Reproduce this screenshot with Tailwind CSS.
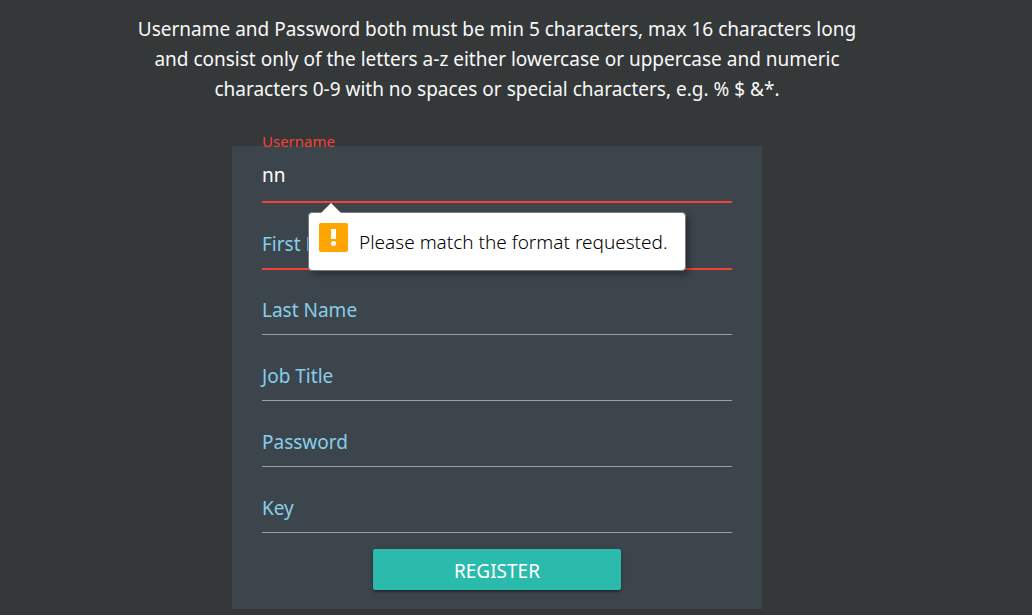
<!DOCTYPE html>
<html lang="en">
<head>
<meta charset="utf-8">
<meta name="viewport" content="width=device-width, initial-scale=1">
<title>Register</title>
<script src="https://cdn.jsdelivr.net/npm/@tailwindcss/browser@4"></script>
</head>
<body class="min-h-screen bg-[#353839] pr-[38px] font-['Segoe_UI','Noto_Sans',sans-serif] text-[19px] text-[#f8f8f8]">
<main class="flex flex-col items-center pt-[14px] pb-[6px]">
  <p class="max-w-[730px] text-center leading-[30px]">Username and Password both must be min 5 characters, max 16 characters long<br>and consist only of the letters a-z either lowercase or uppercase and numeric<br>characters 0-9 with no spaces or special characters, e.g. % $ &amp;*.</p>
  <form class="mt-[42px] flex w-full max-w-[530px] flex-col gap-[18px] bg-[#3d454c] px-[30px] pt-2 pb-[19px]" novalidate>
    <div class="relative">
      <input id="username" type="text" value="nn" class="block h-12 w-full border-b border-[#f44336] bg-transparent pb-[5px] text-white shadow-[0_1px_0_0_#f44336] outline-none">
      <label for="username" class="absolute -top-[23px] left-0 text-[15px] leading-5 text-[#f44336]">Username</label>
      <div role="alert" class="absolute top-[58px] left-[46px] z-10 flex h-[59px] min-w-[378px] items-center rounded-[4px] border border-[#777b80] bg-white pr-[10px] pl-[10px] text-black shadow-[4px_4px_6px_rgba(0,0,0,0.3)]">
        <svg class="absolute -top-[10px] left-[12px] h-[11px] w-5" viewBox="0 0 20 11" aria-hidden="true"><path d="M0 10L10 0L20 10V11H0Z" fill="#fff"/></svg>
        <svg class="mb-2 h-[29px] w-[29px] shrink-0" viewBox="0 0 29 29" aria-hidden="true"><rect width="29" height="29" rx="2" fill="#ffa500"/><path d="M12 6h5v10h-5z" fill="#fff"/><circle cx="14.500" cy="20.500" r="2.500" fill="#fff"/></svg>
        <span class="ml-[11px] pt-0.5 font-light whitespace-nowrap">Please match the format requested.</span>
      </div>
    </div>
    <div class="relative mt-px">
      <input id="first" type="text" class="block h-12 w-full border-b border-[#f44336] bg-transparent text-white shadow-[0_1px_0_0_#f44336] outline-none">
      <label for="first" class="absolute top-2 left-0 leading-[30px] text-[#87ceeb]">First Name</label>
    </div>
    <div class="relative">
      <input id="last" type="text" class="block h-12 w-full border-b border-[#9e9e9e] bg-transparent text-white outline-none">
      <label for="last" class="absolute top-2 left-0 leading-[30px] text-[#87ceeb]">Last Name</label>
    </div>
    <div class="relative">
      <input id="job" type="text" class="block h-12 w-full border-b border-[#9e9e9e] bg-transparent text-white outline-none">
      <label for="job" class="absolute top-2 left-0 leading-[30px] text-[#87ceeb]">Job Title</label>
    </div>
    <div class="relative">
      <input id="password" type="password" class="block h-12 w-full border-b border-[#9e9e9e] bg-transparent text-white outline-none">
      <label for="password" class="absolute top-2 left-0 leading-[30px] text-[#87ceeb]">Password</label>
    </div>
    <div class="relative">
      <input id="key" type="text" class="block h-12 w-full border-b border-[#9e9e9e] bg-transparent text-white outline-none">
      <label for="key" class="absolute top-2 left-0 leading-[30px] text-[#87ceeb]">Key</label>
    </div>
    <button type="submit" class="-mt-0.5 h-[41px] w-[248px] self-center rounded-[2px] bg-[#2bbbad] pt-1 text-white shadow-[0_2px_2px_0_rgba(0,0,0,0.24),0_3px_1px_-2px_rgba(0,0,0,0.12),0_1px_5px_0_rgba(0,0,0,0.2)]">REGISTER</button>
  </form>
</main>
</body>
</html>
